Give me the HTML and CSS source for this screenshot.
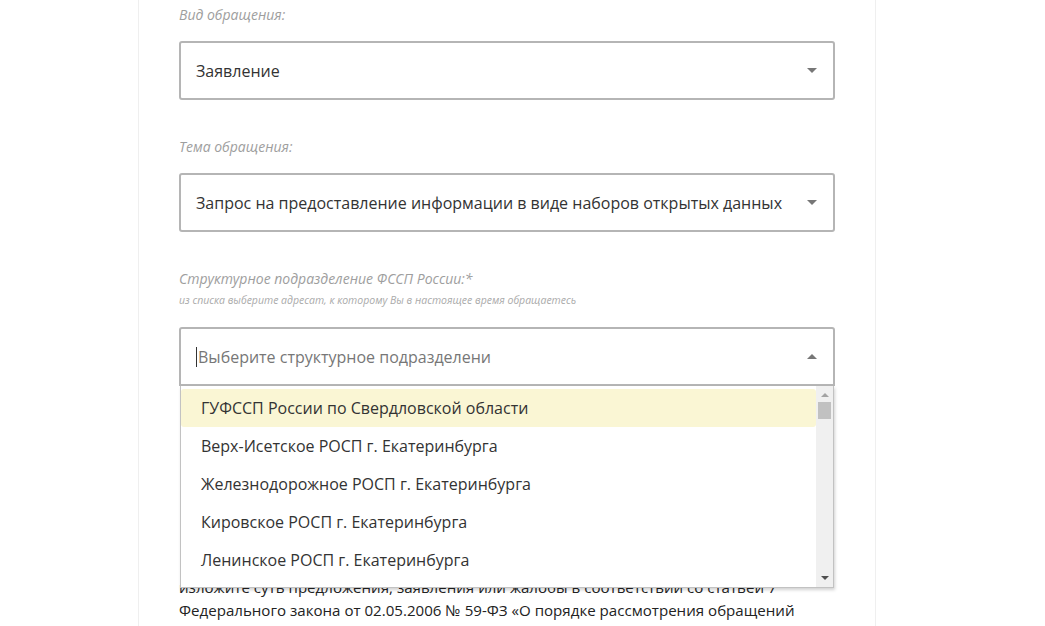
FILE: index.html
```html
<!DOCTYPE html>
<html>
    <head>
        <title>Обращение</title>
        <link rel="stylesheet" href="styles.css">
    </head>
    <body>
        <div class="card">
            <div class="field">
                <label class="label">Вид обращения:</label>
                <div class="select">
                    <span class="value">Заявление</span>
                    <span class="caret"></span>
                </div>
            </div>
            <div class="field">
                <label class="label">Тема обращения:</label>
                <div class="select">
                    <span class="value">Запрос на предоставление информации в виде наборов открытых данных</span>
                    <span class="caret"></span>
                </div>
            </div>
            <div class="field field-open">
                <label class="label">Структурное подразделение ФССП России:*</label>
                <p class="hint">из списка выберите адресат, к которому Вы в настоящее время обращаетесь</p>
                <div class="select select-open">
                    <span class="cursor"></span>
                    <span class="placeholder">Выберите структурное подразделени</span>
                    <span class="caret caret-up"></span>
                </div>
                <!-- open list of the third select -->
                <div class="dropdown">
                    <ul class="options">
                        <li class="option active">ГУФССП России по Свердловской области</li>
                        <li class="option">Верх-Исетское РОСП г. Екатеринбурга</li>
                        <li class="option">Железнодорожное РОСП г. Екатеринбурга</li>
                        <li class="option">Кировское РОСП г. Екатеринбурга</li>
                        <li class="option">Ленинское РОСП г. Екатеринбурга</li>
                        <li class="option">Октябрьское РОСП г. Екатеринбурга</li>
                    </ul>
                    <div class="scrollbar">
                        <span class="sb-arrow sb-up"></span>
                        <span class="sb-thumb"></span>
                        <span class="sb-space"></span>
                        <span class="sb-arrow sb-down"></span>
                    </div>
                </div>
            </div>
            <p class="text">
                изложите суть предложения, заявления или жалобы в соответствии со статьей 7
                Федерального закона от 02.05.2006 № 59-ФЗ «О порядке рассмотрения обращений
                граждан Российской Федерации»
            </p>
        </div>
    </body>
</html>
```

FILE: styles.css
```css
body
{
    margin: 0;
    background-color: #ffffff;
    font-family: "Open Sans", "Liberation Sans", sans-serif;
    overflow: hidden;
}
.card
{
    margin-left: 138px;
    width: 656px;
    padding: 6px 40px 0 40px;
    border-left: 1px solid #efefef;
    border-right: 1px solid #efefef;
    min-height: 700px;
}
.field
{
    margin-bottom: 38px;
}
.field-open
{
    position: relative;
    margin-bottom: 0;
}
.label
{
    display: block;
    font-size: 14px;
    font-style: italic;
    line-height: 18px;
    color: #9e9e9e;
    margin-bottom: 17px;
}
.field-open .label
{
    margin-bottom: 5px;
}
.hint
{
    margin: 0 0 20px 0;
    font-size: 10.5px;
    font-style: italic;
    line-height: 14px;
    color: #aaaaaa;
}
.select
{
    display: flex;
    align-items: center;
    height: 55px;
    border: 2px solid #b5b5b5;
    border-radius: 3px;
    padding: 0 16px 0 15px;
    background-color: #fff;
    font-size: 16px;
    color: #333;
}
.value
{
    flex: 1;
    white-space: nowrap;
}
.placeholder
{
    flex: 1;
    color: #777;
    white-space: nowrap;
}
.cursor
{
    width: 1px;
    height: 20px;
    background-color: #333;
    margin-right: 1px;
}
.caret
{
    width: 0;
    height: 0;
    border-left: 5px solid transparent;
    border-right: 5px solid transparent;
    border-top: 5px solid #777;
}
.caret-up
{
    border-top: none;
    border-bottom: 5px solid #777;
}
.select-open
{
    border-radius: 3px 3px 0 0;
}
.dropdown
{
    position: absolute;
    top: 100%;
    left: 1px;
    right: 1px;
    height: 201px;
    display: flex;
    background-color: #fff;
    border: 1px solid #c2c2c2;
    border-top: none;
    box-shadow: 1px 2px 3px rgba(0, 0, 0, 0.18);
    overflow: hidden;
    z-index: 2;
}
.options
{
    flex: 1;
    list-style: none;
    margin: 3px 0 0 0;
    padding: 0;
}
.option
{
    height: 38px;
    line-height: 38px;
    padding-left: 20px;
    font-size: 16px;
    color: #333;
    white-space: nowrap;
}
.option.active
{
    background-color: #faf6d4;
    border-radius: 3px;
}
.scrollbar
{
    width: 17px;
    display: flex;
    flex-direction: column;
    align-items: center;
    background-color: #f0f0f0;
}
.sb-arrow
{
    width: 0;
    height: 0;
    border-left: 4px solid transparent;
    border-right: 4px solid transparent;
}
.sb-up
{
    margin-top: 7px;
    border-bottom: 4px solid #a3a3a3;
}
.sb-down
{
    margin-bottom: 7px;
    border-top: 4px solid #505050;
}
.sb-thumb
{
    width: 13px;
    height: 17px;
    margin-top: 5px;
    background-color: #c1c1c1;
}
.sb-space
{
    flex: 1;
}
.text
{
    margin: 190px 0 0 0;
    font-size: 15.1px;
    line-height: 23px;
    color: #222;
}
```
